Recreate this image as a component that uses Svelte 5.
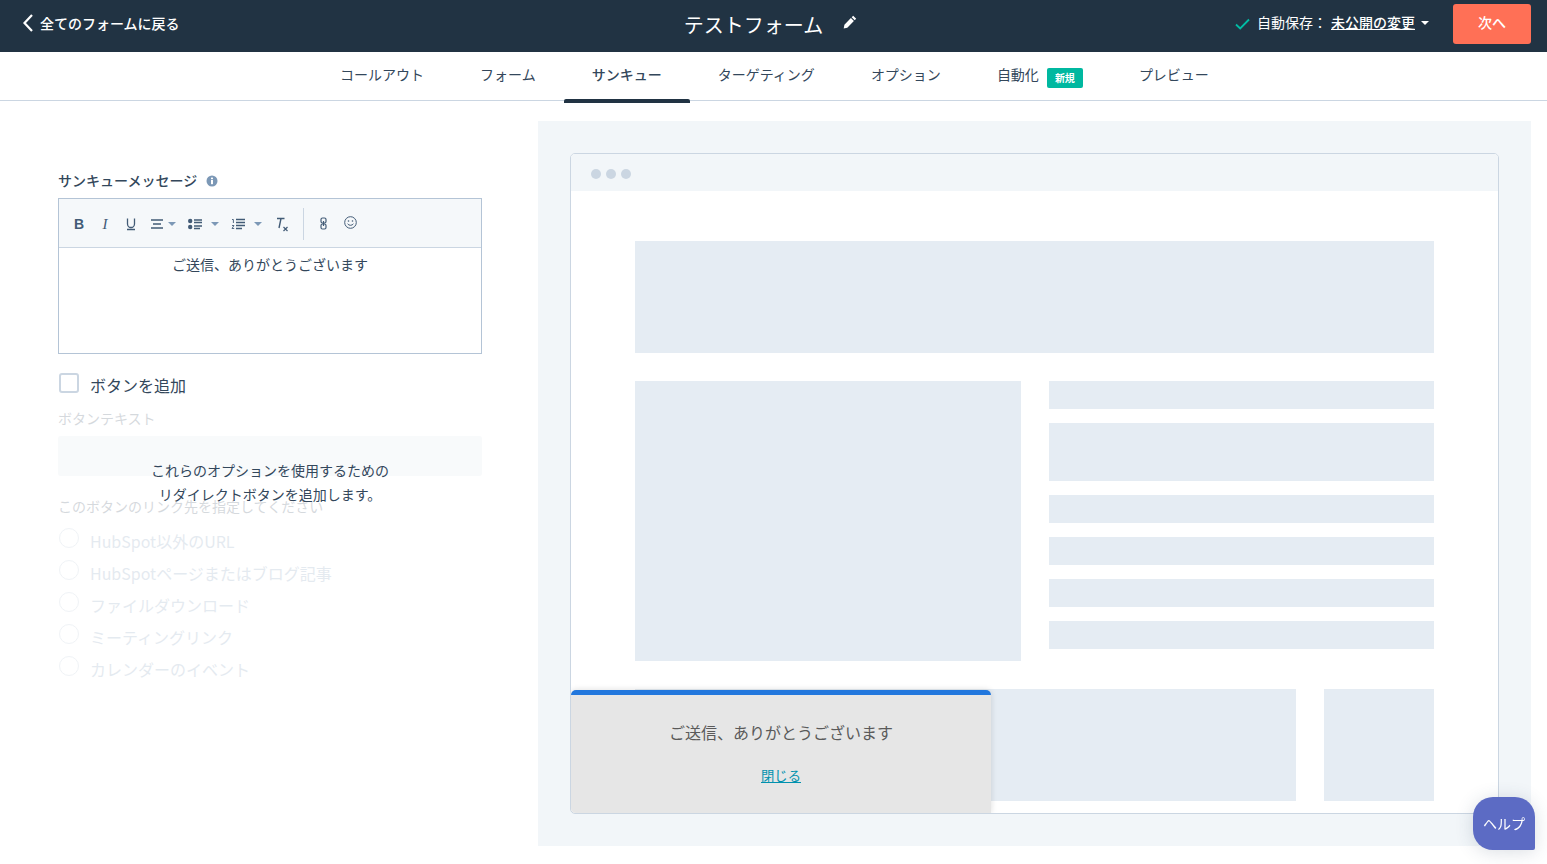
<script>
  const tabs = [
    { label: "コールアウト" },
    { label: "フォーム" },
    { label: "サンキュー", active: true },
    { label: "ターゲティング" },
    { label: "オプション" },
    { label: "自動化", badge: "新規" },
    { label: "プレビュー" },
  ];
  const linkTypes = [
    "HubSpot以外のURL",
    "HubSpotページまたはブログ記事",
    "ファイルダウンロード",
    "ミーティングリンク",
    "カレンダーのイベント",
  ];
  const sideBars = [28, 58, 28, 28, 28, 28];
</script>

<header class="topbar">
  <a class="back" href="#back">
    <svg width="12" height="20" viewBox="0 0 12 20"><path d="M10 2 2.5 10l7.5 8" fill="none" stroke="#fff" stroke-width="2.2" /></svg>
    全てのフォームに戻る
  </a>
  <div class="title">
    <span>テストフォーム</span>
    <svg width="14" height="14" viewBox="0 0 14 14"><path d="M10.2.8l3 3-1.5 1.5-3-3zM7.9 3.1l3 3-6.6 6.6-3.6.7.7-3.7z" fill="#fff" /></svg>
  </div>
  <div class="save">
    <svg width="15" height="12" viewBox="0 0 15 12"><path d="M1 6.5 5.2 10.5 14 1.5" fill="none" stroke="#00bda5" stroke-width="1.8" /></svg>
    <span class="save-label">自動保存：</span>
    <a href="#changes">未公開の変更</a>
    <span class="caret white"></span>
    <button class="next">次へ</button>
  </div>
</header>

<nav class="tabs">
  {#each tabs as tab}
    <div class="tab" class:active={tab.active}>
      {tab.label}
      {#if tab.badge}<span class="badge">{tab.badge}</span>{/if}
    </div>
  {/each}
</nav>

<main class="page">
  <section class="form">
    <div class="label">
      サンキューメッセージ
      <svg width="12" height="12" viewBox="0 0 12 12"><circle cx="6" cy="6" r="5.5" fill="#7c98b6" /><rect x="5" y="5" width="2" height="4.2" fill="#fff" /><rect x="5" y="2.6" width="2" height="1.6" fill="#fff" /></svg>
    </div>
    <div class="editor">
      <div class="toolbar">
        <span class="glyph bold">B</span>
        <span class="glyph italic">I</span>
        <svg class="ic u" width="12" height="14" viewBox="0 0 12 14"><path d="M2.5 1.5v5.5a3.5 3.5 0 0 0 7 0V1.5M2 12.5h8" fill="none" stroke="#425b76" stroke-width="1.3" /></svg>
        <svg class="ic al" width="12" height="12" viewBox="0 0 12 12"><path d="M0 2h12M2 6h8M0 10h12" stroke="#425b76" stroke-width="1.3" /></svg>
        <span class="caret small c1"></span>
        <svg class="ic ul" width="14" height="12" viewBox="0 0 14 12"><circle cx="2.2" cy="3" r="2.2" fill="#425b76" /><circle cx="2.2" cy="9" r="2.2" fill="#425b76" /><path d="M6 2h8M6 4.5h8M6 8h8M6 10.5h6" stroke="#425b76" stroke-width="1.3" /></svg>
        <span class="caret small c2"></span>
        <svg class="ic ol" width="14" height="12" viewBox="0 0 14 12"><path d="M1 1.5h1.4v3.5M1 7.5h2L1 10.5h2.2" fill="none" stroke="#425b76" stroke-width=".9" /><path d="M5 1.5h9M5 4.5h9M5 7.5h9M5 10.5h6" stroke="#425b76" stroke-width="1.3" /></svg>
        <span class="caret small c3"></span>
        <svg class="ic cl" width="13" height="15" viewBox="0 0 13 15"><path d="M1 1.5h7.5M5 1.5 3 11" fill="none" stroke="#425b76" stroke-width="1.4" /><path d="M7.5 10l4 4M11.5 10l-4 4" stroke="#425b76" stroke-width="1.2" /></svg>
        <span class="divider"></span>
        <svg class="ic ln" width="7" height="13" viewBox="0 0 7 13"><rect x="1" y="1" width="5" height="5" rx="1.5" fill="none" stroke="#425b76" stroke-width="1.2" /><rect x="1" y="7" width="5" height="5" rx="1.5" fill="none" stroke="#425b76" stroke-width="1.2" /><path d="M3.5 4v5" stroke="#425b76" stroke-width="1.2" /></svg>
        <svg class="ic em" width="13" height="13" viewBox="0 0 13 13"><circle cx="6.5" cy="6.5" r="5.8" fill="none" stroke="#425b76" /><circle cx="4.5" cy="5" r=".8" fill="#425b76" /><circle cx="8.5" cy="5" r=".8" fill="#425b76" /><path d="M3.6 7.8c1.4 2 4.4 2 5.8 0" fill="none" stroke="#425b76" /></svg>
      </div>
      <div class="editor-body">ご送信、ありがとうございます</div>
    </div>

    <label class="add-button">
      <span class="checkbox"></span>
      ボタンを追加
    </label>

    <div class="locked">
      <div class="faded">
        <div class="label plain">ボタンテキスト</div>
        <div class="fake-input"></div>
        <div class="label plain link-label">このボタンのリンク先を指定してください</div>
        <ul class="radios">
          {#each linkTypes as type}
            <li><span class="radio"></span><span class="radio-text">{type}</span></li>
          {/each}
        </ul>
      </div>
      <p class="hint">これらのオプションを使用するための<br />リダイレクトボタンを追加します。</p>
    </div>
  </section>

  <section class="preview">
    <div class="browser">
      <div class="browser-head">
        <i></i><i></i><i></i>
      </div>
      <div class="browser-body">
        <div class="block hero"></div>
        <div class="row">
          <div class="block feature"></div>
          <div class="side">
            {#each sideBars as h}
              <div class="block" style="height: {h}px"></div>
            {/each}
          </div>
        </div>
        <div class="row bottom">
          <div class="block wide"></div>
          <div class="block narrow"></div>
        </div>
      </div>
      <div class="toast">
        <p>ご送信、ありがとうございます</p>
        <a href="#close">閉じる</a>
      </div>
    </div>
  </section>
</main>

<button class="help">ヘルプ</button>

<style>
  :global(body) {
    margin: 0;
    background: #fff;
    color: #33475b;
    font-family: "Noto Sans CJK JP", "Noto Sans", sans-serif;
    font-size: 14px;
    overflow: hidden;
  }

  .topbar {
    display: grid;
    grid-template-columns: 1fr auto 1fr;
    align-items: center;
    height: 52px;
    background: #213343;
    color: #fff;
  }

  .back {
    display: flex;
    align-items: center;
    gap: 6px;
    padding-left: 22px;
    color: #fff;
    font-weight: 500;
    text-decoration: none;
    line-height: 20px;
    margin-top: -6px;
  }

  .title {
    display: flex;
    align-items: center;
    gap: 20px;
    margin: 0 6px 2px 0;
    font-size: 20px;
    line-height: 28px;
  }

  .title svg {
    margin-top: -6px;
  }

  .save {
    display: flex;
    align-items: center;
    justify-content: flex-end;
    margin-bottom: 4px;
    padding-right: 16px;
    line-height: 20px;
  }

  .save-label {
    margin-left: 7px;
    margin-top: -4px;
    width: 74px;
  }

  .save a {
    margin-top: -4px;
    color: #fff;
    font-weight: 500;
  }

  .caret {
    display: inline-block;
    width: 0;
    height: 0;
    border-left: 4px solid transparent;
    border-right: 4px solid transparent;
    border-top: 4px solid #7c98b6;
  }

  .caret.white {
    border-top-color: #fff;
    margin: -3px 24px 0 6px;
  }

  .next {
    width: 78px;
    height: 40px;
    border: 0;
    border-radius: 3px;
    background: #ff7056;
    color: #fff;
    font: 500 14px "Noto Sans CJK JP", sans-serif;
    padding: 0 0 4px;
  }

  .tabs {
    display: flex;
    justify-content: center;
    height: 48px;
    padding-left: 2px;
    border-bottom: 1px solid #cbd6e2;
  }

  .tab {
    position: relative;
    display: flex;
    align-items: center;
    gap: 8px;
    padding: 0 28px 4px;
    line-height: 20px;
    color: #33475b;
  }

  .tab.active {
    font-weight: 500;
  }

  .tab.active::after {
    content: "";
    position: absolute;
    left: 0;
    right: 0;
    bottom: -3px;
    height: 4px;
    border-radius: 2px 2px 0 0;
    background: #213343;
  }

  .badge {
    display: flex;
    align-items: center;
    justify-content: center;
    width: 36px;
    height: 20px;
    margin-top: 8px;
    border-radius: 2px;
    background: #00b8a0;
    color: #fff;
    font-size: 10px;
    font-weight: 700;
    line-height: 1;
  }

  .page {
    display: flex;
    align-items: flex-start;
  }

  .form {
    width: 424px;
    margin-left: 58px;
    padding-top: 70px;
  }

  .label {
    display: flex;
    align-items: center;
    gap: 9px;
    height: 18px;
    padding-bottom: 2px;
    margin-bottom: 7px;
    line-height: 20px;
    font-weight: 500;
  }

  .label svg {
    margin-top: 2px;
  }

  .editor {
    height: 154px;
    border: 1px solid #b4c4d6;
  }

  .toolbar {
    position: relative;
    height: 48px;
    background: #f5f8fa;
    border-bottom: 1px solid #cbd6e2;
  }

  /* toolbar items sit on fixed slots, so they are placed over the bar */
  .toolbar > * {
    position: absolute;
  }

  .glyph {
    top: 15px;
    width: 12px;
    text-align: center;
    color: #425b76;
    line-height: 20px;
    font-family: "Liberation Sans", sans-serif;
  }

  .bold { left: 14px; font-size: 14px; font-weight: 700; }
  .italic { left: 40px; font-size: 15px; font-style: italic; font-family: "Liberation Serif", serif; }
  .u { left: 66px; top: 18px; }
  .al { left: 92px; top: 19px; }
  .c1 { left: 109px; top: 23px; }
  .ul { left: 129px; top: 19px; }
  .c2 { left: 152px; top: 23px; }
  .ol { left: 172px; top: 19px; }
  .c3 { left: 195px; top: 23px; }
  .cl { left: 217px; top: 18px; }
  .ln { left: 261px; top: 18px; }
  .em { left: 285px; top: 17px; }

  .divider {
    left: 244px;
    top: 9px;
    width: 1px;
    height: 32px;
    background: #cbd6e2;
  }

  .editor-body {
    padding-top: 6px;
    text-align: center;
    line-height: 20px;
  }

  .add-button {
    display: flex;
    align-items: center;
    gap: 11px;
    height: 24px;
    margin-top: 19px;
    margin-left: 1px;
    font-size: 16px;
    line-height: 24px;
  }

  .checkbox {
    box-sizing: border-box;
    width: 20px;
    height: 20px;
    margin-top: -5px;
    border: 2px solid #cbd6e2;
    border-radius: 3px;
    background: #fff;
  }

  .locked {
    position: relative;
    margin-top: 11px;
  }

  .faded {
    opacity: 0.2;
  }

  .label.plain {
    height: 20px;
    padding: 0;
    margin-bottom: 8px;
    font-weight: 400;
  }

  .fake-input {
    height: 40px;
    border-radius: 3px;
    background: #dfe7f0;
  }

  .link-label {
    margin-top: 20px;
  }

  .radios {
    list-style: none;
    margin: 13px 0 0;
    padding: 0;
  }

  .radios li {
    display: flex;
    gap: 11px;
    height: 32px;
    margin-left: 1px;
    font-size: 16px;
    line-height: 24px;
  }

  .radio {
    box-sizing: border-box;
    width: 20px;
    height: 20px;
    margin-top: -1px;
    border: 1.5px solid #b4c4d6;
    border-radius: 50%;
  }

  .radio-text {
    color: #7c98b6;
  }

  .hint {
    position: absolute;
    top: 50px;
    left: 0;
    right: 0;
    margin: 0;
    text-align: center;
    line-height: 24px;
  }

  .preview {
    box-sizing: border-box;
    width: 993px;
    height: 725px;
    margin: 20px 0 0 56px;
    padding: 32px;
    background: #f2f6f9;
  }

  .browser {
    position: relative;
    box-sizing: border-box;
    height: 661px;
    border: 1px solid #cbd6e2;
    border-radius: 5px;
    background: #fff;
    overflow: hidden;
  }

  .browser-head {
    display: flex;
    align-items: center;
    gap: 5px;
    height: 37px;
    padding: 2px 0 0 20px;
    box-sizing: border-box;
    background: #f2f6f9;
  }

  .browser-head i {
    width: 10px;
    height: 10px;
    border-radius: 50%;
    background: #cbd6e2;
  }

  .browser-body {
    display: flex;
    flex-direction: column;
    gap: 28px;
    padding: 50px 64px 0;
  }

  .block {
    background: #e5ecf3;
  }

  .hero {
    height: 112px;
  }

  .row {
    display: flex;
    gap: 28px;
  }

  .feature {
    width: 386px;
    height: 280px;
  }

  .side {
    display: flex;
    flex: 1;
    flex-direction: column;
    gap: 14px;
  }

  .bottom .wide {
    flex: 1;
    height: 112px;
  }

  .bottom .narrow {
    width: 110px;
    height: 112px;
  }

  .toast {
    position: absolute;
    left: 0;
    bottom: 0;
    box-sizing: border-box;
    width: 420px;
    height: 123px;
    padding-top: 25px;
    border-top: 5px solid #2277dd;
    border-radius: 5px 5px 0 5px;
    background: #e6e6e6;
    box-shadow: 0 0 6px rgba(0, 0, 0, 0.14);
    text-align: center;
  }

  .toast p {
    margin: 0 0 21px;
    color: #5a5a5a;
    font-size: 16px;
    line-height: 24px;
  }

  .toast a {
    color: #0091ae;
    font-size: 13.33px;
    line-height: 20px;
  }

  .help {
    position: fixed;
    left: 1473px;
    top: 797px;
    width: 62px;
    height: 53px;
    border: 0;
    border-radius: 20px 20px 2px 20px;
    background: #5c6bc4;
    box-shadow: 0 2px 18px rgba(50, 70, 100, 0.18);
    color: #fff;
    font: 14px "Noto Sans CJK JP", sans-serif;
    padding: 0 0 2px;
  }
</style>
